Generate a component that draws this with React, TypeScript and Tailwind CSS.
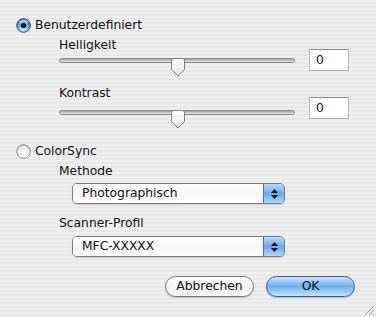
import React from 'react';

const Radio: React.FC<{ on?: boolean }> = ({ on }) => (
  <svg width="15" height="15" viewBox="0 0 15 15" className="shrink-0">
    <defs>
      <radialGradient id="rOn" cx="50%" cy="78%" r="70%">
        <stop offset="0%" stopColor="#d6f0ff" />
        <stop offset="45%" stopColor="#7fbdf3" />
        <stop offset="100%" stopColor="#2f6fc4" />
      </radialGradient>
      <radialGradient id="rOff" cx="50%" cy="80%" r="75%">
        <stop offset="0%" stopColor="#ffffff" />
        <stop offset="60%" stopColor="#f0f0f0" />
        <stop offset="100%" stopColor="#c4c4c4" />
      </radialGradient>
      <linearGradient id="rGloss" x1="0" y1="0" x2="0" y2="1">
        <stop offset="0%" stopColor="#ffffff" stopOpacity="0.9" />
        <stop offset="100%" stopColor="#ffffff" stopOpacity="0.1" />
      </linearGradient>
    </defs>
    <circle cx="7.5" cy="7.5" r="6.8" fill={on ? 'url(#rOn)' : 'url(#rOff)'} stroke={on ? '#2a4f8f' : '#8c8c8c'} strokeWidth="1" />
    <ellipse cx="7.5" cy="4.6" rx="4.6" ry="2.6" fill="url(#rGloss)" opacity={on ? 0.8 : 0.6} />
    {on && <circle cx="7.5" cy="7.5" r="2.6" fill="#0d0d0d" />}
  </svg>
);

const Thumb: React.FC = () => (
  <svg width="16" height="19" viewBox="0 0 16 19" className="absolute left-[111px] top-0">
    <defs>
      <linearGradient id="thumbG" x1="0" y1="0" x2="0" y2="1">
        <stop offset="0%" stopColor="#ffffff" />
        <stop offset="55%" stopColor="#f4f4f4" />
        <stop offset="100%" stopColor="#dcdcdc" />
      </linearGradient>
    </defs>
    <path d="M1.5 2.5 Q1.5 0.5 3.5 0.5 H12.5 Q14.5 0.5 14.5 2.5 V11.5 L8 18 L1.5 11.5 Z" fill="url(#thumbG)" stroke="#7d7d7d" strokeWidth="1" />
    <line x1="2.5" y1="6" x2="13.5" y2="6" stroke="#e2e2e2" strokeWidth="1" />
  </svg>
);

const Slider: React.FC<{ top: number }> = ({ top }) => (
  <div className={`relative h-[23px] w-[236px] ${top === 1 ? 'pt-[1px]' : 'pt-[5px]'}`}>
    <div className="relative h-[19px]">
      <div className="mt-[4px] h-[5px] rounded-full border border-[#8e8e8e] bg-gradient-to-b from-[#9c9c9c] via-[#c4c4c4] to-[#e0e0e0]" />
      <Thumb />
    </div>
  </div>
);

const NumBox: React.FC = () => (
  <div className="mt-[12px] ml-[14px] w-[40px] h-[22px] bg-white border border-[#b4b4b4] border-t-[#8e8e8e] pl-[6px] leading-[20px]">0</div>
);

const Popup: React.FC<{ value: string }> = ({ value }) => (
  <div className="ml-[72px] w-[213px] h-[21px] flex rounded-[5px] border border-[#7c7c7c] overflow-hidden shadow-[0_1px_1px_rgba(0,0,0,0.15)]">
    <div className="flex-1 pl-[9px] leading-[19px] bg-gradient-to-b from-[#ffffff] via-[#f6f6f6] to-[#ffffff]">{value}</div>
    <div className="w-[21px] border-l border-[#4a6fae] bg-gradient-to-b from-[#b8d8f8] via-[#6aa9ec] to-[#a9d6fb] flex flex-col items-center justify-center gap-[2px]">
      <svg width="7" height="4" viewBox="0 0 7 4"><path d="M3.5 0 L7 4 H0 Z" fill="#111" /></svg>
      <svg width="7" height="4" viewBox="0 0 7 4"><path d="M0 0 H7 L3.5 4 Z" fill="#111" /></svg>
    </div>
  </div>
);

const App: React.FC = () => {
  return (
    <div className="relative w-[376px] h-[317px] overflow-hidden text-[#111] text-[12.3px] font-['DejaVu_Sans',sans-serif] bg-[repeating-linear-gradient(to_bottom,#eeeeee_0px,#eeeeee_2px,#e8e8e8_2px,#e8e8e8_4px)]">
      <div className="pt-[17px]">
        {/* Benutzerdefiniert */}
        <div className="flex items-center h-[16px] pl-[16px] gap-[4px]">
          <Radio on />
          <span className="leading-[16px]">Benutzerdefiniert</span>
        </div>

        {/* Helligkeit */}
        <div className="flex mt-[4px]">
          <div className="ml-[59px]">
            <div className="leading-[16px] h-[16px]">Helligkeit</div>
            <Slider top={1} />
          </div>
          <NumBox />
        </div>

        {/* Kontrast */}
        <div className="flex mt-[9px]">
          <div className="ml-[59px]">
            <div className="leading-[16px] h-[16px]">Kontrast</div>
            <Slider top={5} />
          </div>
          <NumBox />
        </div>

        {/* ColorSync */}
        <div className="flex items-center h-[16px] pl-[16px] gap-[4px] mt-[19px]">
          <Radio />
          <span className="leading-[16px]">ColorSync</span>
        </div>

        <div className="ml-[59px] mt-[4px] leading-[16px] h-[16px]">Methode</div>
        <div className="mt-[4px]"><Popup value="Photographisch" /></div>

        <div className="ml-[59px] mt-[11px] leading-[16px] h-[16px]">Scanner-Profil</div>
        <div className="mt-[5px]"><Popup value="MFC-XXXXX" /></div>

        {/* Buttons */}
        <div className="flex justify-end gap-[12px] pr-[21px] mt-[19px]">
          <button className="w-[89px] h-[21px] rounded-full border border-[#7a7a7a] bg-gradient-to-b from-[#ffffff] via-[#f0f0f0] to-[#fbfbfb] leading-[19px] shadow-[0_1px_1px_rgba(0,0,0,0.2)]">Abbrechen</button>
          <button className="w-[89px] h-[21px] rounded-full border border-[#3b5a96] bg-gradient-to-b from-[#c9e2fb] via-[#6eaeee] to-[#bfe3fd] leading-[19px] shadow-[0_1px_1px_rgba(0,0,0,0.25)]">OK</button>
        </div>
      </div>

      {/* resize grip */}
      <svg width="12" height="12" viewBox="0 0 12 12" className="absolute right-[1px] bottom-[1px]">
        <path d="M11 2 L2 11 M11 6 L6 11 M11 10 L10 11" stroke="#9a9a9a" strokeWidth="1" />
        <path d="M12 3 L3 12 M12 7 L7 12" stroke="#ffffff" strokeWidth="1" />
      </svg>
    </div>
  );
};

export default App;
